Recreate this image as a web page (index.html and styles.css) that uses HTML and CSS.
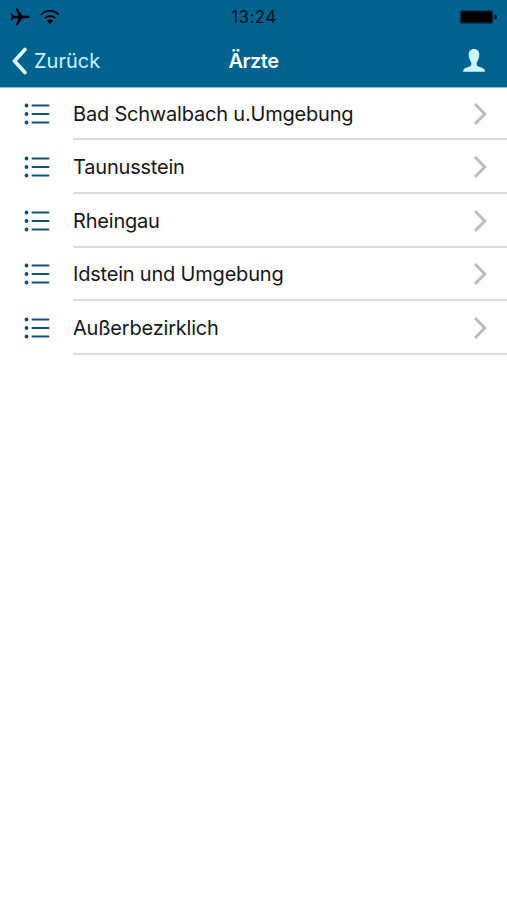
FILE: index.html
```
<!DOCTYPE html>
<html lang="de">
    <head>
        <meta charset="utf-8">
        <title>Ärzte</title>
        <link rel="stylesheet" href="styles.css">
    </head>
    <body>
        <!-- icons used more than once -->
        <svg class="sprite">
            <symbol id="list" viewBox="0 0 26 22">
                <path d="M8.5 2.5H24.5M8.5 11H24.5M8.5 19.5H24.5" stroke="currentColor" stroke-width="2" stroke-linecap="round"/>
                <circle cx="2.5" cy="2.5" r="1.9" fill="currentColor"/>
                <circle cx="2.5" cy="11" r="1.9" fill="currentColor"/>
                <circle cx="2.5" cy="19.5" r="1.9" fill="currentColor"/>
            </symbol>
            <symbol id="arrow" viewBox="0 0 14 24">
                <path d="M2 2L11.8 12L2 22" fill="none" stroke="currentColor" stroke-width="2.9"/>
            </symbol>
        </svg>
        <header>
            <div class="status">
                <div class="signals">
                    <svg width="20" height="18" viewBox="0 0 20 18">
                        <path d="M19.5 9C19.5 8.200 18.500 7.800 17.500 7.800H12.500L7.500 .6H5.800L8.300 7.800H4L2 5.400H.7L1.700 9L.7 12.600H2L4 10.200H8.300L5.800 17.400H7.500L12.500 10.200H17.500C18.500 10.200 19.500 9.800 19.500 9Z"/>
                    </svg>
                    <svg width="20" height="16" viewBox="0 0 20 16">
                        <path d="M1.200 5.600C6.200 .7 13.800 .7 18.800 5.600M4.700 9.200C7.800 6.300 12.200 6.300 15.300 9.200" fill="none" stroke="#000" stroke-width="1.800"/>
                        <path d="M10 15L6.800 11.800C8.600 10.200 11.400 10.200 13.200 11.800Z"/>
                    </svg>
                </div>
                <div class="clock">13:24</div>
                <svg class="battery" width="39" height="16" viewBox="0 0 39 16">
                    <rect x=".5" y="1" width="34" height="14" rx="2.500" fill="#003a59"/>
                    <rect x="2" y="2.500" width="31" height="11" rx="1"/>
                    <path d="M35.500 5.500C38.800 5.800 38.800 10.200 35.500 10.500Z"/>
                </svg>
            </div>
            <div class="nav">
                <a class="back">
                    <svg width="16" height="28" viewBox="0 0 16 28">
                        <path d="M14 2.500L3.500 14L14 25.500" fill="none" stroke="currentColor" stroke-width="3.600" stroke-linecap="round"/>
                    </svg>
                    <span>Zurück</span>
                </a>
                <h1>Ärzte</h1>
                <a class="user">
                    <svg width="22" height="23" viewBox="0 0 22 23">
                        <path d="M11 0C7.500 0 5.700 2.200 5.700 5.600C5.700 8.500 6.700 11.300 8 13C8.700 14 8.600 16.200 7.500 17C6 18.100 1.800 18.800 .8 20.200C.3 21 .1 22 .1 22.700H21.900C21.900 22 21.700 21 21.200 20.200C20.200 18.800 16 18.100 14.500 17C13.400 16.200 13.300 14 14 13C15.300 11.300 16.300 8.500 16.300 5.600C16.300 2.200 14.500 0 11 0Z" fill="currentColor"/>
                    </svg>
                </a>
            </div>
        </header>
        <ul class="regions">
            <li>
                <svg class="list-icon"><use href="#list"/></svg>
                <div class="entry"><span>Bad Schwalbach u.Umgebung</span><svg class="arrow"><use href="#arrow"/></svg></div>
            </li>
            <li>
                <svg class="list-icon"><use href="#list"/></svg>
                <div class="entry"><span>Taunusstein</span><svg class="arrow"><use href="#arrow"/></svg></div>
            </li>
            <li>
                <svg class="list-icon"><use href="#list"/></svg>
                <div class="entry"><span>Rheingau</span><svg class="arrow"><use href="#arrow"/></svg></div>
            </li>
            <li>
                <svg class="list-icon"><use href="#list"/></svg>
                <div class="entry"><span>Idstein und Umgebung</span><svg class="arrow"><use href="#arrow"/></svg></div>
            </li>
            <li>
                <svg class="list-icon"><use href="#list"/></svg>
                <div class="entry"><span>Außerbezirklich</span><svg class="arrow"><use href="#arrow"/></svg></div>
            </li>
        </ul>
    </body>
</html>
```
FILE: styles.css
```
* {
    box-sizing: border-box;
}
body {
    margin: 0;
    min-height: 100vh;
    background: #fefefe;
    color: #161616;
    font-family: Inter, "Liberation Sans", sans-serif;
    font-size: 20px;
}
svg {
    display: block;
    flex: none;
}
.sprite {
    display: none;
}
header {
    height: 88px;
    background: #00638f;
    border-bottom: 1px solid #8fb9cc;
}
.status {
    display: grid;
    grid-template-columns: 1fr auto 1fr;
    align-items: center;
    height: 34px;
    padding: 0 9px 0 10px;
    color: #06141c;
}
.signals {
    display: flex;
    align-items: center;
    gap: 10px;
}
.clock {
    font-size: 17px;
    letter-spacing: 0.4px;
}
.battery {
    justify-self: end;
}
.nav {
    display: grid;
    grid-template-columns: 1fr auto 1fr;
    align-items: center;
    height: 53px;
    padding: 0 11px;
    color: #c9f6ff;
}
.back {
    display: flex;
    align-items: center;
    gap: 7px;
}
.back svg {
    color: #e0fbff;
}
.nav h1 {
    margin: 0;
    color: #fff;
    font-size: 20px;
    font-weight: 600;
    letter-spacing: -0.5px;
}
.user {
    justify-self: end;
    margin-right: 11px;
}
.regions {
    margin: 0;
    padding: 0;
    list-style: none;
}
.regions li {
    display: flex;
    align-items: center;
    height: 53.75px;
    padding-left: 24px;
}
.regions li:first-child {
    height: 52px;
}
.list-icon {
    width: 26px;
    height: 22px;
    margin-right: 23px;
    color: #14506f;
}
.entry {
    display: flex;
    flex: 1;
    align-items: center;
    justify-content: space-between;
    height: 100%;
    padding: 2px 20px 0 0;
    border-bottom: 2px solid #dcdcde;
    letter-spacing: -0.2px;
}
.arrow {
    width: 14px;
    height: 24px;
    color: #bcbcbc;
}
```
